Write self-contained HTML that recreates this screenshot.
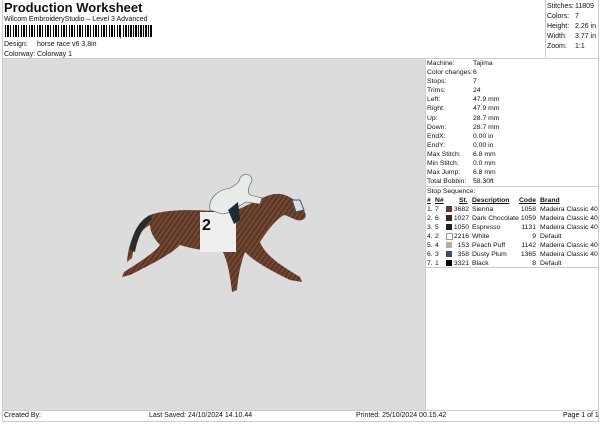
<!DOCTYPE html><html><head><style>
body{margin:0;width:600px;height:424px;background:#fff;position:relative;font-family:"Liberation Sans",sans-serif;font-size:7px;color:#111;overflow:hidden}
.a{position:absolute;white-space:nowrap;line-height:9px}
.r{text-align:right}
</style></head><body>
<div class="a" style="left:4px;top:1px;font-size:13px;font-weight:bold;line-height:14px">Production Worksheet</div>
<div class="a" style="left:4px;top:15px">Wilcom EmbroideryStudio – Level 3 Advanced</div>
<div class="a" style="left:5px;top:25px;width:116px;height:12px;background:repeating-linear-gradient(90deg,#000 0 1px,#fff 1px 2px,#000 2px 4px,#fff 4px 5px,#000 5px 6px,#fff 6px 8px)"></div>
<div class="a" style="left:119px;top:30px;font-weight:bold;font-size:9px">,</div>
<div class="a" style="left:123px;top:25px;width:30px;height:12px;background:repeating-linear-gradient(90deg,#000 0 1px,#fff 1px 2px,#000 2px 4px,#fff 4px 5px)"></div>
<div class="a" style="left:4px;top:40px">Design:</div><div class="a" style="left:37px;top:40px">horse race v6 3,8in</div>
<div class="a" style="left:4px;top:50px">Colorway:</div><div class="a" style="left:37px;top:50px">Colorway 1</div>
<div class="a" style="left:2px;top:0;width:1px;height:422px;background:#ccc"></div>
<div class="a" style="left:598px;top:0;width:1px;height:422px;background:#ccc"></div>
<div class="a" style="left:545px;top:0;width:53px;height:58px;border-left:1px solid #ccc"></div>
<div class="a" style="left:2px;top:58px;width:597px;height:1px;background:#ccc"></div>
<div class="a" style="left:547px;top:2px">Stitches:</div><div class="a" style="left:575px;top:2px">11809</div>
<div class="a" style="left:547px;top:12px">Colors:</div><div class="a" style="left:575px;top:12px">7</div>
<div class="a" style="left:547px;top:22px">Height:</div><div class="a" style="left:575px;top:22px">2.26 in</div>
<div class="a" style="left:547px;top:32px">Width:</div><div class="a" style="left:575px;top:32px">3.77 in</div>
<div class="a" style="left:547px;top:42px">Zoom:</div><div class="a" style="left:575px;top:42px">1:1</div>
<div class="a" style="left:3px;top:59px;width:422px;height:351px;background:#dcdcdc"></div>
<div class="a" style="left:425px;top:59px;width:1px;height:351px;background:#ccc"></div>
<div class="a" style="left:2px;top:410px;width:597px;height:1px;background:#ccc"></div>
<div class="a" style="left:2px;top:421px;width:597px;height:1px;background:#ccc"></div>
<div class="a" style="left:4px;top:411px">Created By:</div>
<div class="a" style="left:149px;top:411px">Last Saved: 24/10/2024 14.10.44</div>
<div class="a" style="left:356px;top:411px">Printed: 25/10/2024 00.15.42</div>
<div class="a" style="left:563px;top:411px">Page 1 of 1</div>
<div style="position:absolute;left:426px;top:59px;width:172px;font-size:6.8px">
<div class="a" style="left:1px;top:0;line-height:9.1px">Machine:<br>Color changes:<br>Stops:<br>Trims:<br>Left:<br>Right:<br>Up:<br>Down:<br>EndX:<br>EndY:<br>Max Stitch:<br>Min Stitch:<br>Max Jump:<br>Total Bobbin:</div>
<div class="a" style="left:47px;top:0;line-height:9.1px">Tajima<br>6<br>7<br>24<br>47.9 mm<br>47.9 mm<br>28.7 mm<br>28.7 mm<br>0.00 in<br>0.00 in<br>6.8 mm<br>0.0 mm<br>6.8 mm<br>58.30ft</div>
<div class="a" style="left:-1px;top:127px;width:173px;height:1px;background:#ccc"></div>
<div class="a" style="left:1px;top:128px">Stop Sequence:</div>
<div class="a" style="left:1px;top:137px;font-weight:bold;text-decoration:underline">#</div>
<div class="a" style="left:9px;top:137px;font-weight:bold;text-decoration:underline">N#</div>
<div class="a" style="left:33px;top:137px;width:10px;font-weight:bold;text-decoration:underline">St.</div>
<div class="a" style="left:46px;top:137px;font-weight:bold;text-decoration:underline">Description</div>
<div class="a r" style="left:90px;top:137px;width:20px;font-weight:bold;text-decoration:underline">Code</div>
<div class="a" style="left:114px;top:137px;font-weight:bold;text-decoration:underline">Brand</div>
<div class="a" style="left:1px;top:146px;line-height:9px">1.<br>2.<br>3.<br>4.<br>5.<br>6.<br>7.</div>
<div class="a" style="left:9px;top:146px;line-height:9px">7<br>6<br>5<br>2<br>4<br>3<br>1</div>
<div class="a" style="left:20px;top:147px;width:6px;height:6px;background:#6b3a2a"></div>
<div class="a" style="left:20px;top:156px;width:6px;height:6px;background:#3a2a26"></div>
<div class="a" style="left:20px;top:165px;width:6px;height:6px;background:#222"></div>
<div class="a" style="left:20px;top:174px;width:5px;height:5px;background:#fff;border:.5px solid #999"></div>
<div class="a" style="left:20px;top:183px;width:6px;height:6px;background:#c9a79a"></div>
<div class="a" style="left:20px;top:192px;width:6px;height:6px;background:#3d4e6a"></div>
<div class="a" style="left:20px;top:201px;width:6px;height:6px;background:#000"></div>
<div class="a r" style="left:26px;top:146px;width:17px;line-height:9px">3682<br>1027<br>1050<br>2216<br>153<br>358<br>3321</div>
<div class="a" style="left:46px;top:146px;line-height:9px">Sienna<br>Dark Chocolate<br>Espresso<br>White<br>Peach Puff<br>Dusty Plum<br>Black</div>
<div class="a r" style="left:90px;top:146px;width:20px;line-height:9px">1058<br>1059<br>1131<br>9<br>1142<br>1365<br>8</div>
<div class="a" style="left:114px;top:146px;line-height:9px">Madeira Classic 40<br>Madeira Classic 40<br>Madeira Classic 40<br>Default<br>Madeira Classic 40<br>Madeira Classic 40<br>Default</div>
<div class="a" style="left:-1px;top:208px;width:173px;height:1px;background:#ccc"></div>
</div>
<svg class="a" style="left:110px;top:170px" width="210" height="130" viewBox="0 0 210 130">
<defs><pattern id="p" width="4" height="4" patternUnits="userSpaceOnUse" patternTransform="rotate(35)"><rect width="4" height="4" fill="#74452f"/><rect width="1.3" height="4" fill="#4a3024"/></pattern></defs>
<path d="M40 45 C60 38 90 40 120 42 C135 38 145 30 160 25 C170 22 180 25 190 35 C196 42 198 48 192 50 C186 52 180 46 174 45 C165 50 158 60 150 72 C155 85 170 95 190 107 L192 112 L180 110 C160 100 145 92 135 82 C130 95 128 108 127 120 L122 122 C120 105 118 92 112 80 C95 82 80 78 70 75 C60 85 40 95 20 105 L12 107 L14 102 C30 92 45 82 50 75 C45 70 40 62 40 55 C30 60 25 70 22 88 L17 92 C18 75 25 55 40 45Z" fill="url(#p)"/>
<path d="M40 45 C30 50 22 62 20 80 L25 82 C28 66 34 55 42 50Z" fill="#2a2a2a"/>
<rect x="90" y="42" width="36" height="40" fill="#eee"/>
<text x="92" y="60" font-family="Liberation Sans" font-weight="bold" font-size="16" fill="#111">2</text>
<path d="M100 40 C98 28 108 20 120 18 C126 15 130 12 130 8 C134 2 142 4 142 10 C140 16 136 20 140 25 L152 28 L150 34 L136 32 C128 36 120 44 112 44Z" fill="#e8ece8" stroke="#555" stroke-width=".6"/>
<path d="M118 40 L128 32 L130 50 L124 54Z" fill="#1e2a36"/>
<path d="M182 30 L190 30 L194 40 L186 42Z" fill="#ddd" stroke="#36506a" stroke-width="1"/>
</svg>
</body></html>
